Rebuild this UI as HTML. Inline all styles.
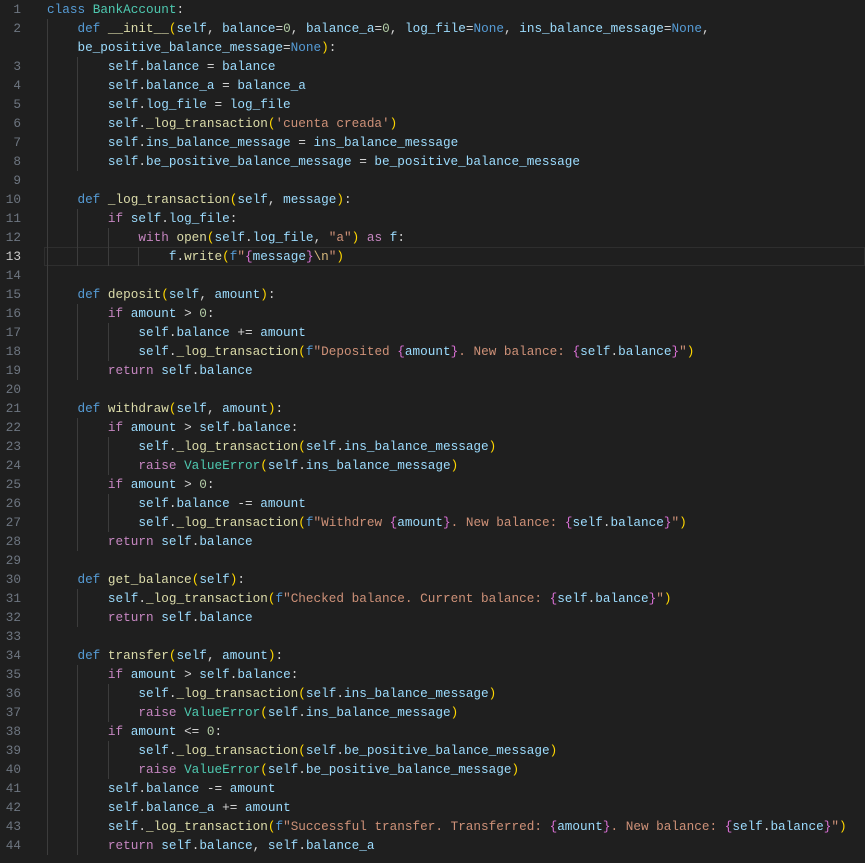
<!DOCTYPE html>
<html><head><meta charset="utf-8"><style>
body{margin:0;background:#1f1f1f;width:865px;height:863px;overflow:hidden;font-family:"Liberation Mono",monospace;font-size:12.7px;color:#d4d4d4}
.r{position:relative;height:19px;line-height:19px;white-space:pre}
.n{position:absolute;left:0;width:21px;text-align:right;color:#6e7681}
.c0{position:absolute;left:47px;top:0}
.cur{box-shadow:inset 0 0 0 1px #2e2e2e;}
.cur .n{color:#cccccc}
i{display:inline-block;width:4ch;height:19px;vertical-align:top;box-shadow:inset 1px 0 #3c3c3c;font-style:normal}
.k{color:#569cd6}.c{color:#c586c0}.f{color:#dcdcaa}.v{color:#9cdcfe}.s{color:#ce9178}.t{color:#4ec9b0}.m{color:#b5cea8}.y{color:#ffd700}.p{color:#da70d6}.e{color:#d7ba7d}
</style></head><body><div style="padding-top:0">
<div class="r"><span class="n">1</span><span class="c0"><span class="k">class</span> <span class="t">BankAccount</span>:</span></div>
<div class="r"><span class="n">2</span><span class="c0"><i></i><span class="k">def</span> <span class="f">__init__</span><span class="y">(</span><span class="v">self</span>, <span class="v">balance</span>=<span class="m">0</span>, <span class="v">balance_a</span>=<span class="m">0</span>, <span class="v">log_file</span>=<span class="k">None</span>, <span class="v">ins_balance_message</span>=<span class="k">None</span>,</span></div>
<div class="r"><span class="n"></span><span class="c0"><i></i><span class="v">be_positive_balance_message</span>=<span class="k">None</span><span class="y">)</span>:</span></div>
<div class="r"><span class="n">3</span><span class="c0"><i></i><i></i><span class="v">self</span>.<span class="v">balance</span> = <span class="v">balance</span></span></div>
<div class="r"><span class="n">4</span><span class="c0"><i></i><i></i><span class="v">self</span>.<span class="v">balance_a</span> = <span class="v">balance_a</span></span></div>
<div class="r"><span class="n">5</span><span class="c0"><i></i><i></i><span class="v">self</span>.<span class="v">log_file</span> = <span class="v">log_file</span></span></div>
<div class="r"><span class="n">6</span><span class="c0"><i></i><i></i><span class="v">self</span>.<span class="f">_log_transaction</span><span class="y">(</span><span class="s">'cuenta creada'</span><span class="y">)</span></span></div>
<div class="r"><span class="n">7</span><span class="c0"><i></i><i></i><span class="v">self</span>.<span class="v">ins_balance_message</span> = <span class="v">ins_balance_message</span></span></div>
<div class="r"><span class="n">8</span><span class="c0"><i></i><i></i><span class="v">self</span>.<span class="v">be_positive_balance_message</span> = <span class="v">be_positive_balance_message</span></span></div>
<div class="r"><span class="n">9</span><span class="c0"><i></i></span></div>
<div class="r"><span class="n">10</span><span class="c0"><i></i><span class="k">def</span> <span class="f">_log_transaction</span><span class="y">(</span><span class="v">self</span>, <span class="v">message</span><span class="y">)</span>:</span></div>
<div class="r"><span class="n">11</span><span class="c0"><i></i><i></i><span class="c">if</span> <span class="v">self</span>.<span class="v">log_file</span>:</span></div>
<div class="r"><span class="n">12</span><span class="c0"><i></i><i></i><i></i><span class="c">with</span> <span class="f">open</span><span class="y">(</span><span class="v">self</span>.<span class="v">log_file</span>, <span class="s">"a"</span><span class="y">)</span> <span class="c">as</span> <span class="v">f</span>:</span></div>
<div class="r cur" style="margin-left:44px"><span class="n" style="left:-44px">13</span><span class="c0" style="left:3px"><i></i><i></i><i></i><i></i><span class="v">f</span>.<span class="f">write</span><span class="y">(</span><span class="k">f</span><span class="s">"</span><span class="p">{</span><span class="v">message</span><span class="p">}</span><span class="e">\n</span><span class="s">"</span><span class="y">)</span></span></div>
<div class="r"><span class="n">14</span><span class="c0"><i></i></span></div>
<div class="r"><span class="n">15</span><span class="c0"><i></i><span class="k">def</span> <span class="f">deposit</span><span class="y">(</span><span class="v">self</span>, <span class="v">amount</span><span class="y">)</span>:</span></div>
<div class="r"><span class="n">16</span><span class="c0"><i></i><i></i><span class="c">if</span> <span class="v">amount</span> &gt; <span class="m">0</span>:</span></div>
<div class="r"><span class="n">17</span><span class="c0"><i></i><i></i><i></i><span class="v">self</span>.<span class="v">balance</span> += <span class="v">amount</span></span></div>
<div class="r"><span class="n">18</span><span class="c0"><i></i><i></i><i></i><span class="v">self</span>.<span class="f">_log_transaction</span><span class="y">(</span><span class="k">f</span><span class="s">"Deposited </span><span class="p">{</span><span class="v">amount</span><span class="p">}</span><span class="s">. New balance: </span><span class="p">{</span><span class="v">self</span>.<span class="v">balance</span><span class="p">}</span><span class="s">"</span><span class="y">)</span></span></div>
<div class="r"><span class="n">19</span><span class="c0"><i></i><i></i><span class="c">return</span> <span class="v">self</span>.<span class="v">balance</span></span></div>
<div class="r"><span class="n">20</span><span class="c0"><i></i></span></div>
<div class="r"><span class="n">21</span><span class="c0"><i></i><span class="k">def</span> <span class="f">withdraw</span><span class="y">(</span><span class="v">self</span>, <span class="v">amount</span><span class="y">)</span>:</span></div>
<div class="r"><span class="n">22</span><span class="c0"><i></i><i></i><span class="c">if</span> <span class="v">amount</span> &gt; <span class="v">self</span>.<span class="v">balance</span>:</span></div>
<div class="r"><span class="n">23</span><span class="c0"><i></i><i></i><i></i><span class="v">self</span>.<span class="f">_log_transaction</span><span class="y">(</span><span class="v">self</span>.<span class="v">ins_balance_message</span><span class="y">)</span></span></div>
<div class="r"><span class="n">24</span><span class="c0"><i></i><i></i><i></i><span class="c">raise</span> <span class="t">ValueError</span><span class="y">(</span><span class="v">self</span>.<span class="v">ins_balance_message</span><span class="y">)</span></span></div>
<div class="r"><span class="n">25</span><span class="c0"><i></i><i></i><span class="c">if</span> <span class="v">amount</span> &gt; <span class="m">0</span>:</span></div>
<div class="r"><span class="n">26</span><span class="c0"><i></i><i></i><i></i><span class="v">self</span>.<span class="v">balance</span> -= <span class="v">amount</span></span></div>
<div class="r"><span class="n">27</span><span class="c0"><i></i><i></i><i></i><span class="v">self</span>.<span class="f">_log_transaction</span><span class="y">(</span><span class="k">f</span><span class="s">"Withdrew </span><span class="p">{</span><span class="v">amount</span><span class="p">}</span><span class="s">. New balance: </span><span class="p">{</span><span class="v">self</span>.<span class="v">balance</span><span class="p">}</span><span class="s">"</span><span class="y">)</span></span></div>
<div class="r"><span class="n">28</span><span class="c0"><i></i><i></i><span class="c">return</span> <span class="v">self</span>.<span class="v">balance</span></span></div>
<div class="r"><span class="n">29</span><span class="c0"><i></i></span></div>
<div class="r"><span class="n">30</span><span class="c0"><i></i><span class="k">def</span> <span class="f">get_balance</span><span class="y">(</span><span class="v">self</span><span class="y">)</span>:</span></div>
<div class="r"><span class="n">31</span><span class="c0"><i></i><i></i><span class="v">self</span>.<span class="f">_log_transaction</span><span class="y">(</span><span class="k">f</span><span class="s">"Checked balance. Current balance: </span><span class="p">{</span><span class="v">self</span>.<span class="v">balance</span><span class="p">}</span><span class="s">"</span><span class="y">)</span></span></div>
<div class="r"><span class="n">32</span><span class="c0"><i></i><i></i><span class="c">return</span> <span class="v">self</span>.<span class="v">balance</span></span></div>
<div class="r"><span class="n">33</span><span class="c0"><i></i></span></div>
<div class="r"><span class="n">34</span><span class="c0"><i></i><span class="k">def</span> <span class="f">transfer</span><span class="y">(</span><span class="v">self</span>, <span class="v">amount</span><span class="y">)</span>:</span></div>
<div class="r"><span class="n">35</span><span class="c0"><i></i><i></i><span class="c">if</span> <span class="v">amount</span> &gt; <span class="v">self</span>.<span class="v">balance</span>:</span></div>
<div class="r"><span class="n">36</span><span class="c0"><i></i><i></i><i></i><span class="v">self</span>.<span class="f">_log_transaction</span><span class="y">(</span><span class="v">self</span>.<span class="v">ins_balance_message</span><span class="y">)</span></span></div>
<div class="r"><span class="n">37</span><span class="c0"><i></i><i></i><i></i><span class="c">raise</span> <span class="t">ValueError</span><span class="y">(</span><span class="v">self</span>.<span class="v">ins_balance_message</span><span class="y">)</span></span></div>
<div class="r"><span class="n">38</span><span class="c0"><i></i><i></i><span class="c">if</span> <span class="v">amount</span> &lt;= <span class="m">0</span>:</span></div>
<div class="r"><span class="n">39</span><span class="c0"><i></i><i></i><i></i><span class="v">self</span>.<span class="f">_log_transaction</span><span class="y">(</span><span class="v">self</span>.<span class="v">be_positive_balance_message</span><span class="y">)</span></span></div>
<div class="r"><span class="n">40</span><span class="c0"><i></i><i></i><i></i><span class="c">raise</span> <span class="t">ValueError</span><span class="y">(</span><span class="v">self</span>.<span class="v">be_positive_balance_message</span><span class="y">)</span></span></div>
<div class="r"><span class="n">41</span><span class="c0"><i></i><i></i><span class="v">self</span>.<span class="v">balance</span> -= <span class="v">amount</span></span></div>
<div class="r"><span class="n">42</span><span class="c0"><i></i><i></i><span class="v">self</span>.<span class="v">balance_a</span> += <span class="v">amount</span></span></div>
<div class="r"><span class="n">43</span><span class="c0"><i></i><i></i><span class="v">self</span>.<span class="f">_log_transaction</span><span class="y">(</span><span class="k">f</span><span class="s">"Successful transfer. Transferred: </span><span class="p">{</span><span class="v">amount</span><span class="p">}</span><span class="s">. New balance: </span><span class="p">{</span><span class="v">self</span>.<span class="v">balance</span><span class="p">}</span><span class="s">"</span><span class="y">)</span></span></div>
<div class="r"><span class="n">44</span><span class="c0"><i></i><i></i><span class="c">return</span> <span class="v">self</span>.<span class="v">balance</span>, <span class="v">self</span>.<span class="v">balance_a</span></span></div>
</div></body></html>
